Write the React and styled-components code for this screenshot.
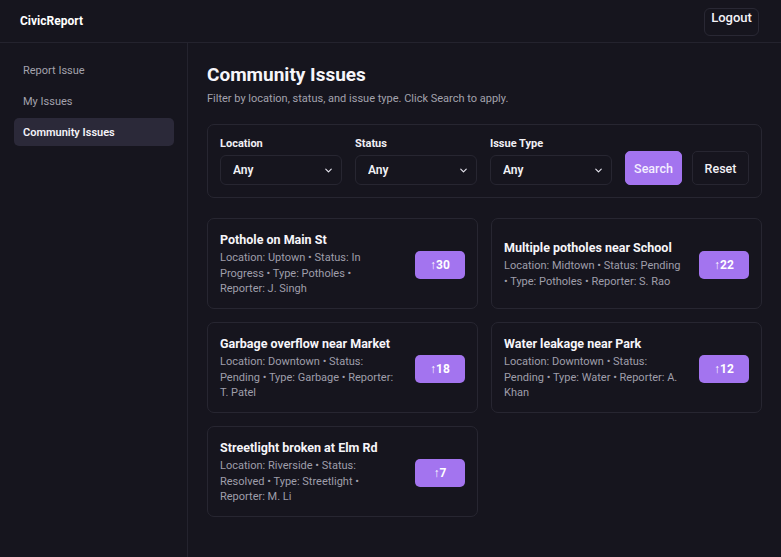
import React from 'react'
import styled, { createGlobalStyle } from 'styled-components'
import { ChevronDown } from 'lucide-react'

const GlobalStyle = createGlobalStyle`
  html, body {
    margin: 0;
    padding: 0;
    background: #16151e;
  }
  body {
    font-family: Roboto, 'Liberation Sans', sans-serif;
    color: #f1f0f5;
  }
  * { box-sizing: border-box; }
`

const Page = styled.div`
  min-height: 557px;
  display: flex;
  flex-direction: column;
  background: #16151e;
`

const Header = styled.header`
  height: 43px;
  border-bottom: 1px solid #24232e;
  display: flex;
  align-items: center;
  justify-content: space-between;
  padding: 0 22px 0 20px;
`

const Logo = styled.div`
  font-size: 12px;
  font-weight: 700;
  color: #ffffff;
`

const LogoutButton = styled.button`
  font-family: inherit;
  font-size: 13px;
  font-weight: 500;
  color: #f4f3f8;
  background: transparent;
  border: 1px solid #292834;
  border-radius: 6px;
  width: 55px;
  height: 28px;
  padding: 0 0 9px;
  margin-top: 1px;
`

const Body = styled.div`
  flex: 1;
  display: flex;
`

const Sidebar = styled.nav`
  width: 188px;
  border-right: 1px solid #24232e;
  padding: 13px 13px 13px 14px;
  display: flex;
  flex-direction: column;
  gap: 3px;
  min-height: 514px;
`

const NavItem = styled.div`
  height: 28px;
  display: flex;
  align-items: center;
  padding-left: 9px;
  border-radius: 5px;
  font-size: 11px;
  font-weight: ${({ active }) => (active ? 600 : 400)};
  color: ${({ active }) => (active ? '#f4f3f8' : '#a3a2ad')};
  background: ${({ active }) => (active ? '#2b2939' : 'transparent')};
`

const Main = styled.main`
  flex: 1;
  padding: 20px 19px 20px 19px;
`

const Title = styled.h1`
  margin: 0;
  font-size: 19px;
  line-height: 24px;
  font-weight: 700;
  color: #f6f5fa;
`

const Subtitle = styled.p`
  margin: 5px 0 0;
  font-size: 11px;
  line-height: 14px;
  color: #a3a2ad;
`

const FilterPanel = styled.div`
  margin-top: 18px;
  border: 1px solid #272631;
  border-radius: 7px;
  padding: 12px 12px 12px;
  display: flex;
  align-items: flex-end;
  gap: 13px;
`

const Field = styled.div`
  flex: 1;
  display: flex;
  flex-direction: column;
  gap: 4px;
`

const Label = styled.label`
  font-size: 11px;
  line-height: 14px;
  font-weight: 700;
  color: #f1f0f5;
`

const SelectWrap = styled.div`
  position: relative;
  height: 30px;
`

const Select = styled.select`
  appearance: none;
  width: 100%;
  height: 30px;
  background: #16151e;
  border: 1px solid #272631;
  border-radius: 6px;
  color: #f1f0f5;
  font-family: inherit;
  font-size: 12px;
  font-weight: 600;
  padding: 0 12px;
`

const Chevron = styled(ChevronDown)`
  position: absolute;
  right: 8px;
  top: 10px;
  color: #e6e5ee;
  pointer-events: none;
`

const ButtonRow = styled.div`
  display: flex;
  gap: 10px;
`

const ActionButton = styled.button`
  width: 57px;
  height: 34px;
  border-radius: 5px;
  font-family: inherit;
  font-size: 12.5px;
  font-weight: 500;
  color: ${({ primary }) => (primary ? '#f3eeff' : '#f1f0f5')};
  background: ${({ primary }) => (primary ? '#a374ef' : 'transparent')};
  border: 1px solid ${({ primary }) => (primary ? '#a374ef' : '#272631')};
`

const Grid = styled.div`
  margin-top: 20px;
  display: grid;
  grid-template-columns: 1fr 1fr;
  gap: 13px;
`

const Card = styled.div`
  border: 1px solid #272631;
  border-radius: 7px;
  padding: 13px 12px 11px;
  min-height: 91px;
  display: flex;
  align-items: center;
  gap: 18px;
`

const CardText = styled.div`
  flex: 1;
  min-width: 0;
`

const CardTitle = styled.div`
  font-size: 12.5px;
  line-height: 16px;
  font-weight: 700;
  color: #f6f5fa;
`

const Meta = styled.div`
  margin-top: 2px;
  font-size: 11px;
  line-height: 15.5px;
  color: #9f9eaa;
`

const VoteButton = styled.button`
  width: 50px;
  height: 28px;
  flex-shrink: 0;
  border: none;
  border-radius: 5px;
  background: #a374ef;
  color: #ffffff;
  font-family: inherit;
  font-size: 12px;
  font-weight: 700;
`

const issues = [
  { title: 'Pothole on Main St', location: 'Uptown', status: 'In Progress', type: 'Potholes', reporter: 'J. Singh', votes: 30 },
  { title: 'Multiple potholes near School', location: 'Midtown', status: 'Pending', type: 'Potholes', reporter: 'S. Rao', votes: 22 },
  { title: 'Garbage overflow near Market', location: 'Downtown', status: 'Pending', type: 'Garbage', reporter: 'T. Patel', votes: 18 },
  { title: 'Water leakage near Park', location: 'Downtown', status: 'Pending', type: 'Water', reporter: 'A. Khan', votes: 12 },
  { title: 'Streetlight broken at Elm Rd', location: 'Riverside', status: 'Resolved', type: 'Streetlight', reporter: 'M. Li', votes: 7 },
]

const FilterField = ({ label }) => (
  <Field>
    <Label>{label}</Label>
    <SelectWrap>
      <Select defaultValue="any">
        <option value="any">Any</option>
      </Select>
      <Chevron size={11} strokeWidth={2.5} />
    </SelectWrap>
  </Field>
)

export default function App() {
  return (
    <Page>
      <GlobalStyle />
      <Header>
        <Logo>CivicReport</Logo>
        <LogoutButton>Logout</LogoutButton>
      </Header>
      <Body>
        <Sidebar>
          <NavItem>Report Issue</NavItem>
          <NavItem>My Issues</NavItem>
          <NavItem active>Community Issues</NavItem>
        </Sidebar>
        <Main>
          <Title>Community Issues</Title>
          <Subtitle>Filter by location, status, and issue type. Click Search to apply.</Subtitle>
          <FilterPanel>
            <FilterField label="Location" />
            <FilterField label="Status" />
            <FilterField label="Issue Type" />
            <ButtonRow>
              <ActionButton primary>Search</ActionButton>
              <ActionButton>Reset</ActionButton>
            </ButtonRow>
          </FilterPanel>
          <Grid>
            {issues.map((issue) => (
              <Card key={issue.title}>
                <CardText>
                  <CardTitle>{issue.title}</CardTitle>
                  <Meta>
                    Location: {issue.location} • Status: {issue.status} • Type: {issue.type} • Reporter: {issue.reporter}
                  </Meta>
                </CardText>
                <VoteButton>↑{issue.votes}</VoteButton>
              </Card>
            ))}
          </Grid>
        </Main>
      </Body>
    </Page>
  )
}
